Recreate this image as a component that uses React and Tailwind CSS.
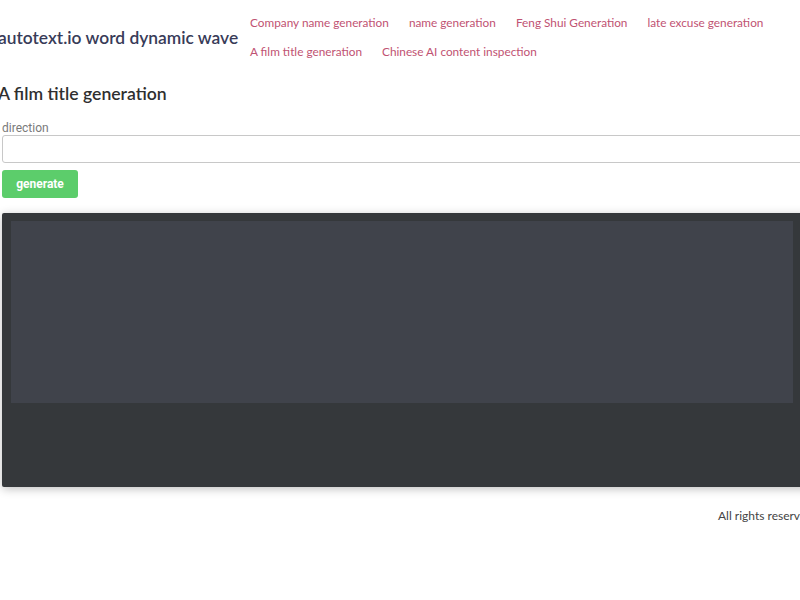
const links = [
  'Company name generation',
  'name generation',
  'Feng Shui Generation',
  'late excuse generation',
  'A film title generation',
  'Chinese AI content inspection',
];

export default function App() {
  return (
    <div className="w-[800px] h-[600px] overflow-hidden bg-white font-['Lato','Open_Sans',sans-serif]">
      <div className="w-[810px] pl-[2px]">
        <header className="flex items-start pt-[8px] h-[68px]">
          <div className="w-[252px] -ml-[4px] mt-[17px] leading-[26px] whitespace-nowrap text-[17.4px] font-semibold text-[#383b58]">
            autotext.io word dynamic wave
          </div>
          <nav className="flex flex-wrap w-[556px] text-[11.8px] text-[#bf5272]">
            {links.map((l) => (
              <a key={l} href="#" className="mr-[20px] h-[29px] leading-[29px]">
                {l}
              </a>
            ))}
          </nav>
        </header>

        <h1 className="-ml-[4px] mt-[14px] leading-[24px] text-[17.6px] font-semibold text-[#2f2f2f]">
          A film title generation
        </h1>

        <div className="mt-[15px] font-['Roboto',sans-serif]">
          <label className="block text-[12px] leading-[14px] text-[#7a7a7a]">direction</label>
          <input
            type="text"
            className="block w-[810px] h-[28px] border border-[#c8c8c8] rounded-[3px] outline-none"
          />
          <button className="mt-[7px] w-[76px] h-[28px] bg-[#5ccd6b] rounded-[3px] text-white text-[12px] font-bold">
            generate
          </button>
        </div>

        <div className="mt-[15px] w-[810px] h-[274px] bg-[#35383b] rounded-[2px] pt-[8px] pl-[9px] shadow-[0_2px_10px_rgba(0,0,0,0.25)]">
          <div className="w-[782px] h-[182px] bg-[#40434b]"></div>
        </div>

        <footer className="mt-[20px] pl-[716px] text-[12px] text-[#444] whitespace-nowrap">
          All rights reserved
        </footer>
      </div>
    </div>
  );
}
